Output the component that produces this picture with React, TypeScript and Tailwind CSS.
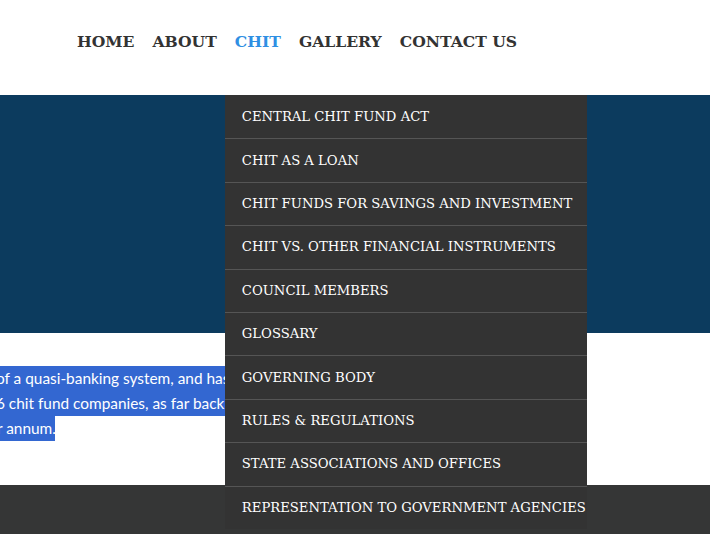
import React from "react";

const navItems = ["HOME", "ABOUT", "CHIT", "GALLERY", "CONTACT US"];

const chitLinks = [
  "CENTRAL CHIT FUND ACT",
  "CHIT AS A LOAN",
  "CHIT FUNDS FOR SAVINGS AND INVESTMENT",
  "CHIT VS. OTHER FINANCIAL INSTRUMENTS",
  "COUNCIL MEMBERS",
  "GLOSSARY",
  "GOVERNING BODY",
  "RULES & REGULATIONS",
  "STATE ASSOCIATIONS AND OFFICES",
  "REPRESENTATION TO GOVERNMENT AGENCIES",
];

const serif = "font-['DejaVu_Serif',serif]";

const App = () => {
  return (
    <div className="w-[710px] h-[534px] overflow-hidden bg-white relative">
      {/* header */}
      <header className="h-[95px] pl-[77px] relative z-20">
        <ul className={`h-full flex gap-[18px] ${serif} font-bold text-[15.6px] text-[#333]`}>
          {navItems.map((item) => (
            <li key={item} className="relative flex items-center pb-[11px]">
              <a className={item === "CHIT" ? "text-[#2f8fe3]" : ""}>{item}</a>
              {item === "CHIT" && (
                <ul className="absolute left-[-10px] top-full w-[362px] bg-[#333333] text-white font-normal text-[13.2px]">
                  {chitLinks.map((link, i) => (
                    <li
                      key={link}
                      className={`h-[43.4px] flex items-center pl-[17px] whitespace-nowrap ${
                        i > 0 ? "border-t border-[#555555]" : ""
                      }`}
                    >
                      {link}
                    </li>
                  ))}
                </ul>
              )}
            </li>
          ))}
        </ul>
      </header>

      {/* hero band */}
      <section className="h-[238px] bg-[#0c3b5e]" />

      {/* content */}
      <section className="h-[152px] pt-[33px] overflow-hidden font-['Lato',sans-serif] text-[15.4px] leading-[25px] text-white">
        <div className="bg-[#3367d1] w-[260px] -indent-[4px] whitespace-nowrap">of a quasi-banking system, and has</div>
        <div className="bg-[#3367d1] w-[260px] -indent-[4px] whitespace-nowrap">6 chit fund companies, as far back</div>
        <div className="bg-[#3367d1] w-[55px] -indent-[3px] whitespace-nowrap">r annum.</div>
      </section>

      {/* footer */}
      <footer className="h-[60px] bg-[#353636]" />
    </div>
  );
};

export default App;
